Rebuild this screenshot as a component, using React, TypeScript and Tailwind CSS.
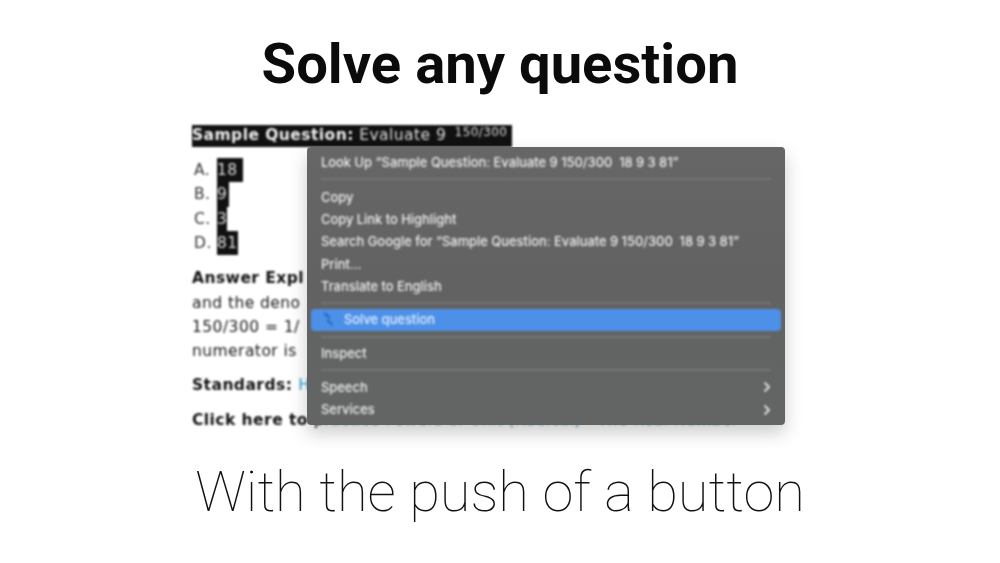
export default function App() {
  const doc = "font-['DejaVu_Sans',sans-serif] text-[15.5px] tracking-[0.45px] text-[#1a1a1a] blur-[0.8px] whitespace-nowrap";
  const item = "h-[22.3px] flex items-center px-[14px] justify-between whitespace-pre";
  const Sep = ({ cls }: { cls: string }) => <div className={"mx-[14px] h-[2px] bg-[#757575] " + cls} />;
  const Chevron = () => (
    <svg width="8" height="12" viewBox="0 0 8 12" fill="none" stroke="#dcdcdc" strokeWidth="2"><path d="M1.5 1.5L6 6L1.5 10.5" /></svg>
  );
  return (
    <div className="w-[1000px] h-[563px] bg-white overflow-hidden flex flex-col items-center font-['Roboto',sans-serif]">
      <h1 className="mt-[31px] h-[66px] leading-[66px] text-[56.2px] font-bold text-[#0b0b0b] blur-[0.6px] whitespace-nowrap">Solve any question</h1>
      <div className="relative mt-[29px] w-[616px] h-[306px]">
        <div className={doc}>
          <div className="h-[22px] leading-[21px] mt-[-1px]">
            <span className="inline-block bg-[#111] text-[#ddd] h-[22px] w-[320px]">
              <b className="text-[#eee]">Sample Question:</b> Evaluate 9 <span className="text-[12px] relative top-[-4px] left-[3px] tracking-[0.4px]">150/300</span>
            </span>
          </div>
          <div className="mt-[11px] flex flex-col">
            {[["A.", "18", "w-[26px]"], ["B.", "9", "w-[12px]"], ["C.", "3", "w-[10px]"], ["D.", "81", "w-[21px]"]].map(([l, n, w]) => (
              <div key={l} className="h-[24.3px] leading-[24px] flex">
                <span className="w-[25px] pl-[2px] text-[#333]">{l}</span>
                <span className={"bg-[#111] text-[#ddd] " + w}>{n}</span>
              </div>
            ))}
          </div>
          <div className="mt-[11px] leading-[24px] h-[24px] font-bold text-[#111]">Answer Expl</div>
          <div className="leading-[24px] mt-[1px]">
            <div>and the deno</div>
            <div>150/300 = 1/</div>
            <div>numerator is</div>
          </div>
          <div className="mt-[10px] leading-[24px] h-[24px] font-bold text-[#111]">Standards: <span className="text-[#2a9fd0] font-normal">H</span></div>
          <div className="mt-[11px] leading-[24px] h-[24px] font-bold text-[#111]">Click here to <span className="font-normal">p</span><span className="font-normal text-[#2a9fd0]">ractice Powers of Unit (Radical) - The Real Number</span></div>
        </div>
        <div className="absolute left-[115px] top-[21px] w-[478px] h-[278px] rounded-[4px] bg-gradient-to-b from-[#666] via-[#626262] to-[#636565] shadow-[0_8px_18px_rgba(0,0,0,0.2)] pt-[5px] pb-[5px] font-['Inter',sans-serif] text-[12.9px] font-medium text-[#eeeeee]">
          <div className="blur-[0.8px]">
            <div className={item}>Look Up “Sample Question: Evaluate 9 150/300  18 9 3 81”</div>
            <Sep cls="mt-[4px] mb-[6px]" />
            <div className={item}>Copy</div>
            <div className={item}>Copy Link to Highlight</div>
            <div className={item}>Search Google for “Sample Question: Evaluate 9 150/300  18 9 3 81”</div>
            <div className={item}>Print…</div>
            <div className={item}>Translate to English</div>
            <Sep cls="mt-[4px] mb-[5px]" />
            <div className="mx-[4px] h-[22px] rounded-[4px] bg-[#4d90e8] flex items-center pl-[10px] gap-[10px] text-[#e2eefc]">
              <svg width="13" height="15" viewBox="0 0 13 15"><path d="M4 0L10 5L7.5 6.5L12 12L11 14.5L5 8.5L7.5 7L2 2Z" fill="#2e6fd0" /></svg>
              <span>Solve question</span>
            </div>
            <Sep cls="mt-[5px] mb-[5px]" />
            <div className={item}>Inspect</div>
            <Sep cls="mt-[4px] mb-[5px]" />
            <div className={item}><span>Speech</span><Chevron /></div>
            <div className={item}><span>Services</span><Chevron /></div>
          </div>
        </div>
      </div>
      <div className="mt-[26px] text-[56px] leading-[68px] font-thin text-[#111] blur-[0.5px] whitespace-nowrap">With the push of a button</div>
    </div>
  );
}
